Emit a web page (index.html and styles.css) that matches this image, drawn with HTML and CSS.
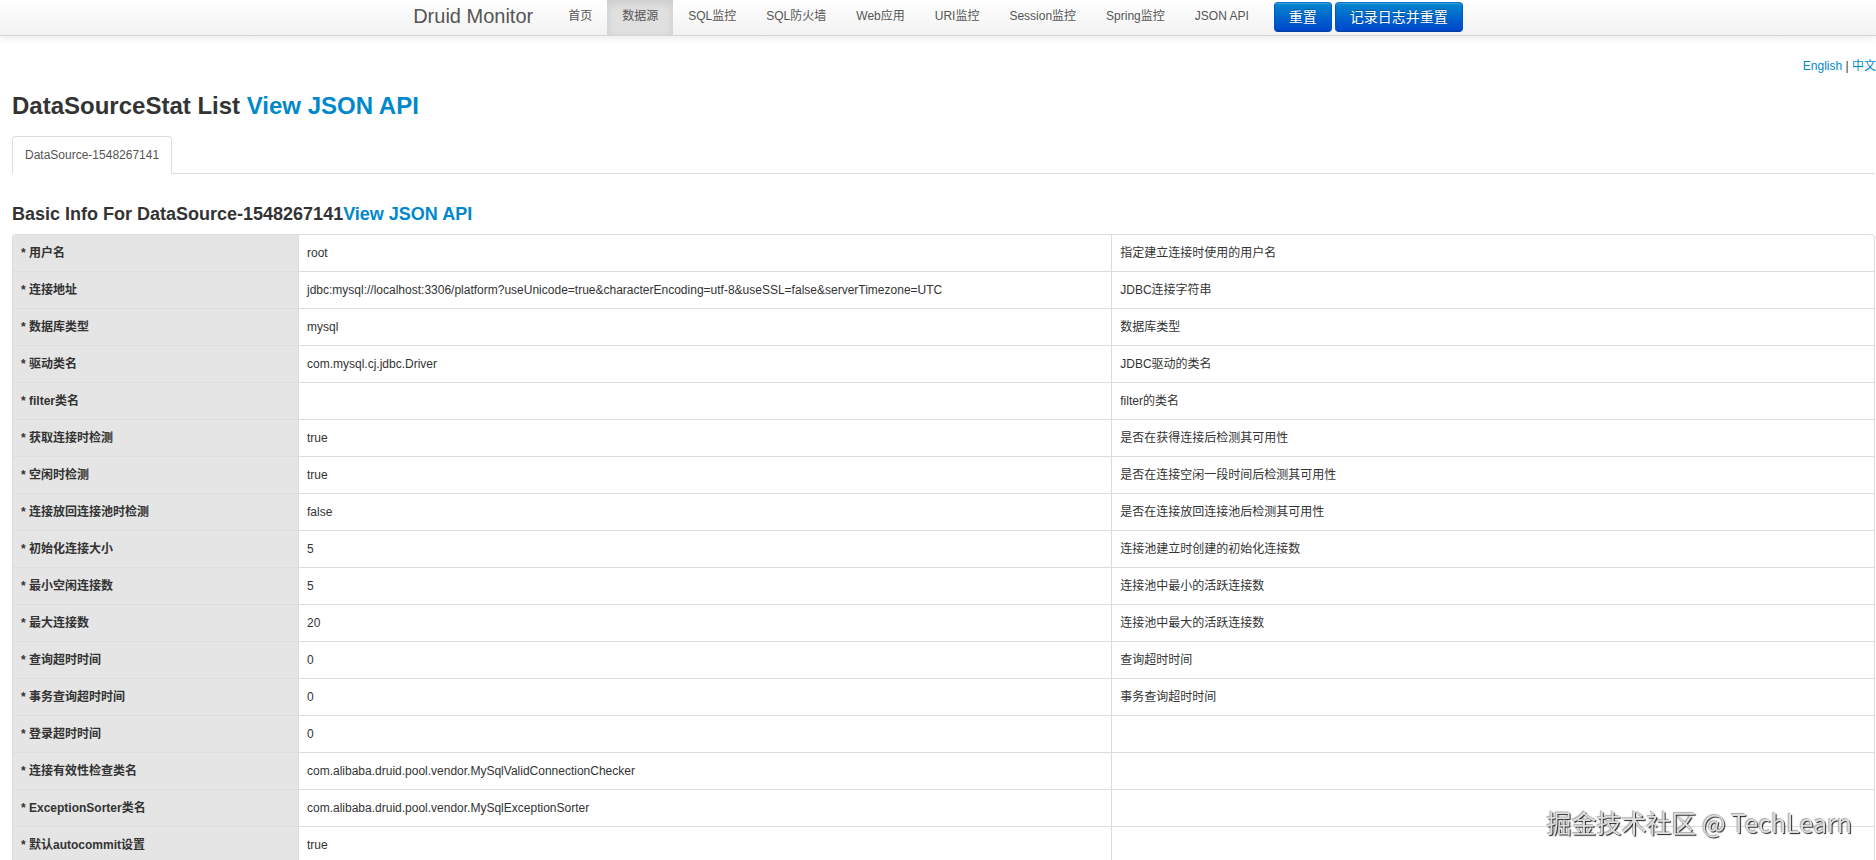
FILE: index.html
```
<!DOCTYPE html>
<html lang="zh-CN">
<head>
	<meta charset="utf-8">
	<meta name="viewport" content="width=device-width, initial-scale=1">
	<title>Druid DataSourceStat</title>
	<link rel="stylesheet" href="styles.css">
</head>
<body>
	<div class="navbar">
		<div class="container">
			<a href="#" class="brand">Druid Monitor</a>
			<ul class="nav">
				<li><a href="#">首页</a></li>
				<li class="active"><a href="#">数据源</a></li>
				<li><a href="#">SQL监控</a></li>
				<li><a href="#">SQL防火墙</a></li>
				<li><a href="#">Web应用</a></li>
				<li><a href="#">URI监控</a></li>
				<li><a href="#">Session监控</a></li>
				<li><a href="#">Spring监控</a></li>
				<li><a href="#">JSON API</a></li>
			</ul>
			<div class="actions">
				<button type="button" class="btn">重置</button>
				<button type="button" class="btn">记录日志并重置</button>
			</div>
		</div>
	</div>

	<div class="content">
		<div class="lang"><a href="#">English</a> | <a href="#">中文</a></div>

		<h2>DataSourceStat List <a href="#">View JSON API</a></h2>

		<ul class="tabs">
			<li><a href="#dataSource">DataSource-1548267141</a></li>
		</ul>

		<div id="dataSource">
			<h3>Basic Info For DataSource-1548267141<a href="#">View JSON API</a></h3>
			<table class="table">
				<colgroup>
					<col class="col-name">
					<col class="col-value">
					<col>
				</colgroup>
				<tbody>
					<tr><th scope="row">* 用户名</th><td>root</td><td>指定建立连接时使用的用户名</td></tr>
					<tr><th scope="row">* 连接地址</th><td>jdbc:mysql://localhost:3306/platform?useUnicode=true&amp;characterEncoding=utf-8&amp;useSSL=false&amp;serverTimezone=UTC</td><td>JDBC连接字符串</td></tr>
					<tr><th scope="row">* 数据库类型</th><td>mysql</td><td>数据库类型</td></tr>
					<tr><th scope="row">* 驱动类名</th><td>com.mysql.cj.jdbc.Driver</td><td>JDBC驱动的类名</td></tr>
					<tr><th scope="row">* filter类名</th><td></td><td>filter的类名</td></tr>
					<tr><th scope="row">* 获取连接时检测</th><td>true</td><td>是否在获得连接后检测其可用性</td></tr>
					<tr><th scope="row">* 空闲时检测</th><td>true</td><td>是否在连接空闲一段时间后检测其可用性</td></tr>
					<tr><th scope="row">* 连接放回连接池时检测</th><td>false</td><td>是否在连接放回连接池后检测其可用性</td></tr>
					<tr><th scope="row">* 初始化连接大小</th><td>5</td><td>连接池建立时创建的初始化连接数</td></tr>
					<tr><th scope="row">* 最小空闲连接数</th><td>5</td><td>连接池中最小的活跃连接数</td></tr>
					<tr><th scope="row">* 最大连接数</th><td>20</td><td>连接池中最大的活跃连接数</td></tr>
					<tr><th scope="row">* 查询超时时间</th><td>0</td><td>查询超时时间</td></tr>
					<tr><th scope="row">* 事务查询超时时间</th><td>0</td><td>事务查询超时时间</td></tr>
					<tr><th scope="row">* 登录超时时间</th><td>0</td><td></td></tr>
					<tr><th scope="row">* 连接有效性检查类名</th><td>com.alibaba.druid.pool.vendor.MySqlValidConnectionChecker</td><td></td></tr>
					<tr><th scope="row">* ExceptionSorter类名</th><td>com.alibaba.druid.pool.vendor.MySqlExceptionSorter</td><td></td></tr>
					<tr><th scope="row">* 默认autocommit设置</th><td>true</td><td></td></tr>
				</tbody>
			</table>
		</div>
	</div>

	<div class="watermark">掘金技术社区 @ TechLearn</div>
</body>
</html>
```

FILE: styles.css
```
* {
	box-sizing: border-box;
}

body {
	margin: 0;
	font-family: "Liberation Sans", Arial, "Noto Sans CJK SC", sans-serif;
	font-size: 12px;
	line-height: 20px;
	color: #333;
	background: #fff;
}

a {
	color: #08c;
	text-decoration: none;
}

ul {
	margin: 0;
	padding: 0;
	list-style: none;
}

/* top bar */
.navbar {
	border-bottom: 1px solid #d4d4d4;
	background: linear-gradient(to bottom, #fff, #f2f2f2);
	box-shadow: 0 1px 10px rgba(0,0,0,0.1);
}

.container {
	display: flex;
	justify-content: center;
	align-items: flex-start;
}

.brand {
	padding: 6px 20px 9px 0;
	font-size: 20px;
	color: #555;
}

.nav {
	display: flex;
}

.nav a {
	display: block;
	padding: 6px 15px 9px;
	color: #555;
}

.nav .active a {
	background: #e0e0e0;
	box-shadow: inset 0 3px 8px rgba(0,0,0,0.1);
}

.actions {
	display: flex;
	gap: 3px;
	padding: 2px 0 0 10px;
}

.btn {
	height: 30px;
	padding: 0 14px;
	border: 1px solid;
	border-color: #0074cc #05c #003f99;
	border-radius: 4px;
	font-family: inherit;
	font-size: 14px;
	line-height: 20px;
	color: #fff;
	text-shadow: 0 -1px 0 rgba(0,0,0,0.25);
	background: linear-gradient(to bottom, #08c, #04c);
	box-shadow: inset 0 1px 0 rgba(255,255,255,0.2);
	cursor: pointer;
}

/* page */
.content {
	padding: 20px 0 0 12px;
}

.lang {
	text-align: right;
}

h2,
h3 {
	margin: 0;
	color: #333;
}

h2 {
	margin: 12px 0;
	font-size: 24px;
	line-height: 36px;
}

h3 {
	margin-bottom: 6px;
	font-size: 18px;
	line-height: 28px;
}

.tabs {
	display: flex;
	margin: 0 1px 26px 0;
	border-bottom: 1px solid #ddd;
}

.tabs a {
	display: block;
	margin-bottom: -1px;
	padding: 8px 12px;
	border: 1px solid #ddd;
	border-bottom-color: #fff;
	border-radius: 4px 4px 0 0;
	color: #555;
	background: #fff;
}

.table {
	width: calc(100% - 1px);
	table-layout: fixed;
	border: 1px solid #ddd;
	border-top: 0;
	border-radius: 4px;
	border-spacing: 0;
}

.col-name {
	width: 285px;
}

.col-value {
	width: 43.7%;
}

.table th,
.table td {
	height: 37px;
	padding: 8px;
	border-top: 1px solid #ddd;
	text-align: left;
	vertical-align: top;
}

.table th {
	background: #e5e5e5;
}

.table td {
	border-left: 1px solid #ddd;
}

.table tr:first-child th {
	border-top-left-radius: 4px;
}

.table tr:first-child td:last-child {
	border-top-right-radius: 4px;
}

.watermark {
	position: fixed;
	right: 24px;
	bottom: 20px;
	font-family: "Noto Sans CJK SC", sans-serif;
	font-size: 25px;
	line-height: 36px;
	color: #ddd;
	text-shadow: 1px 1px 1px #222, -1px -1px 1px #aaa;
	pointer-events: none;
}
```
